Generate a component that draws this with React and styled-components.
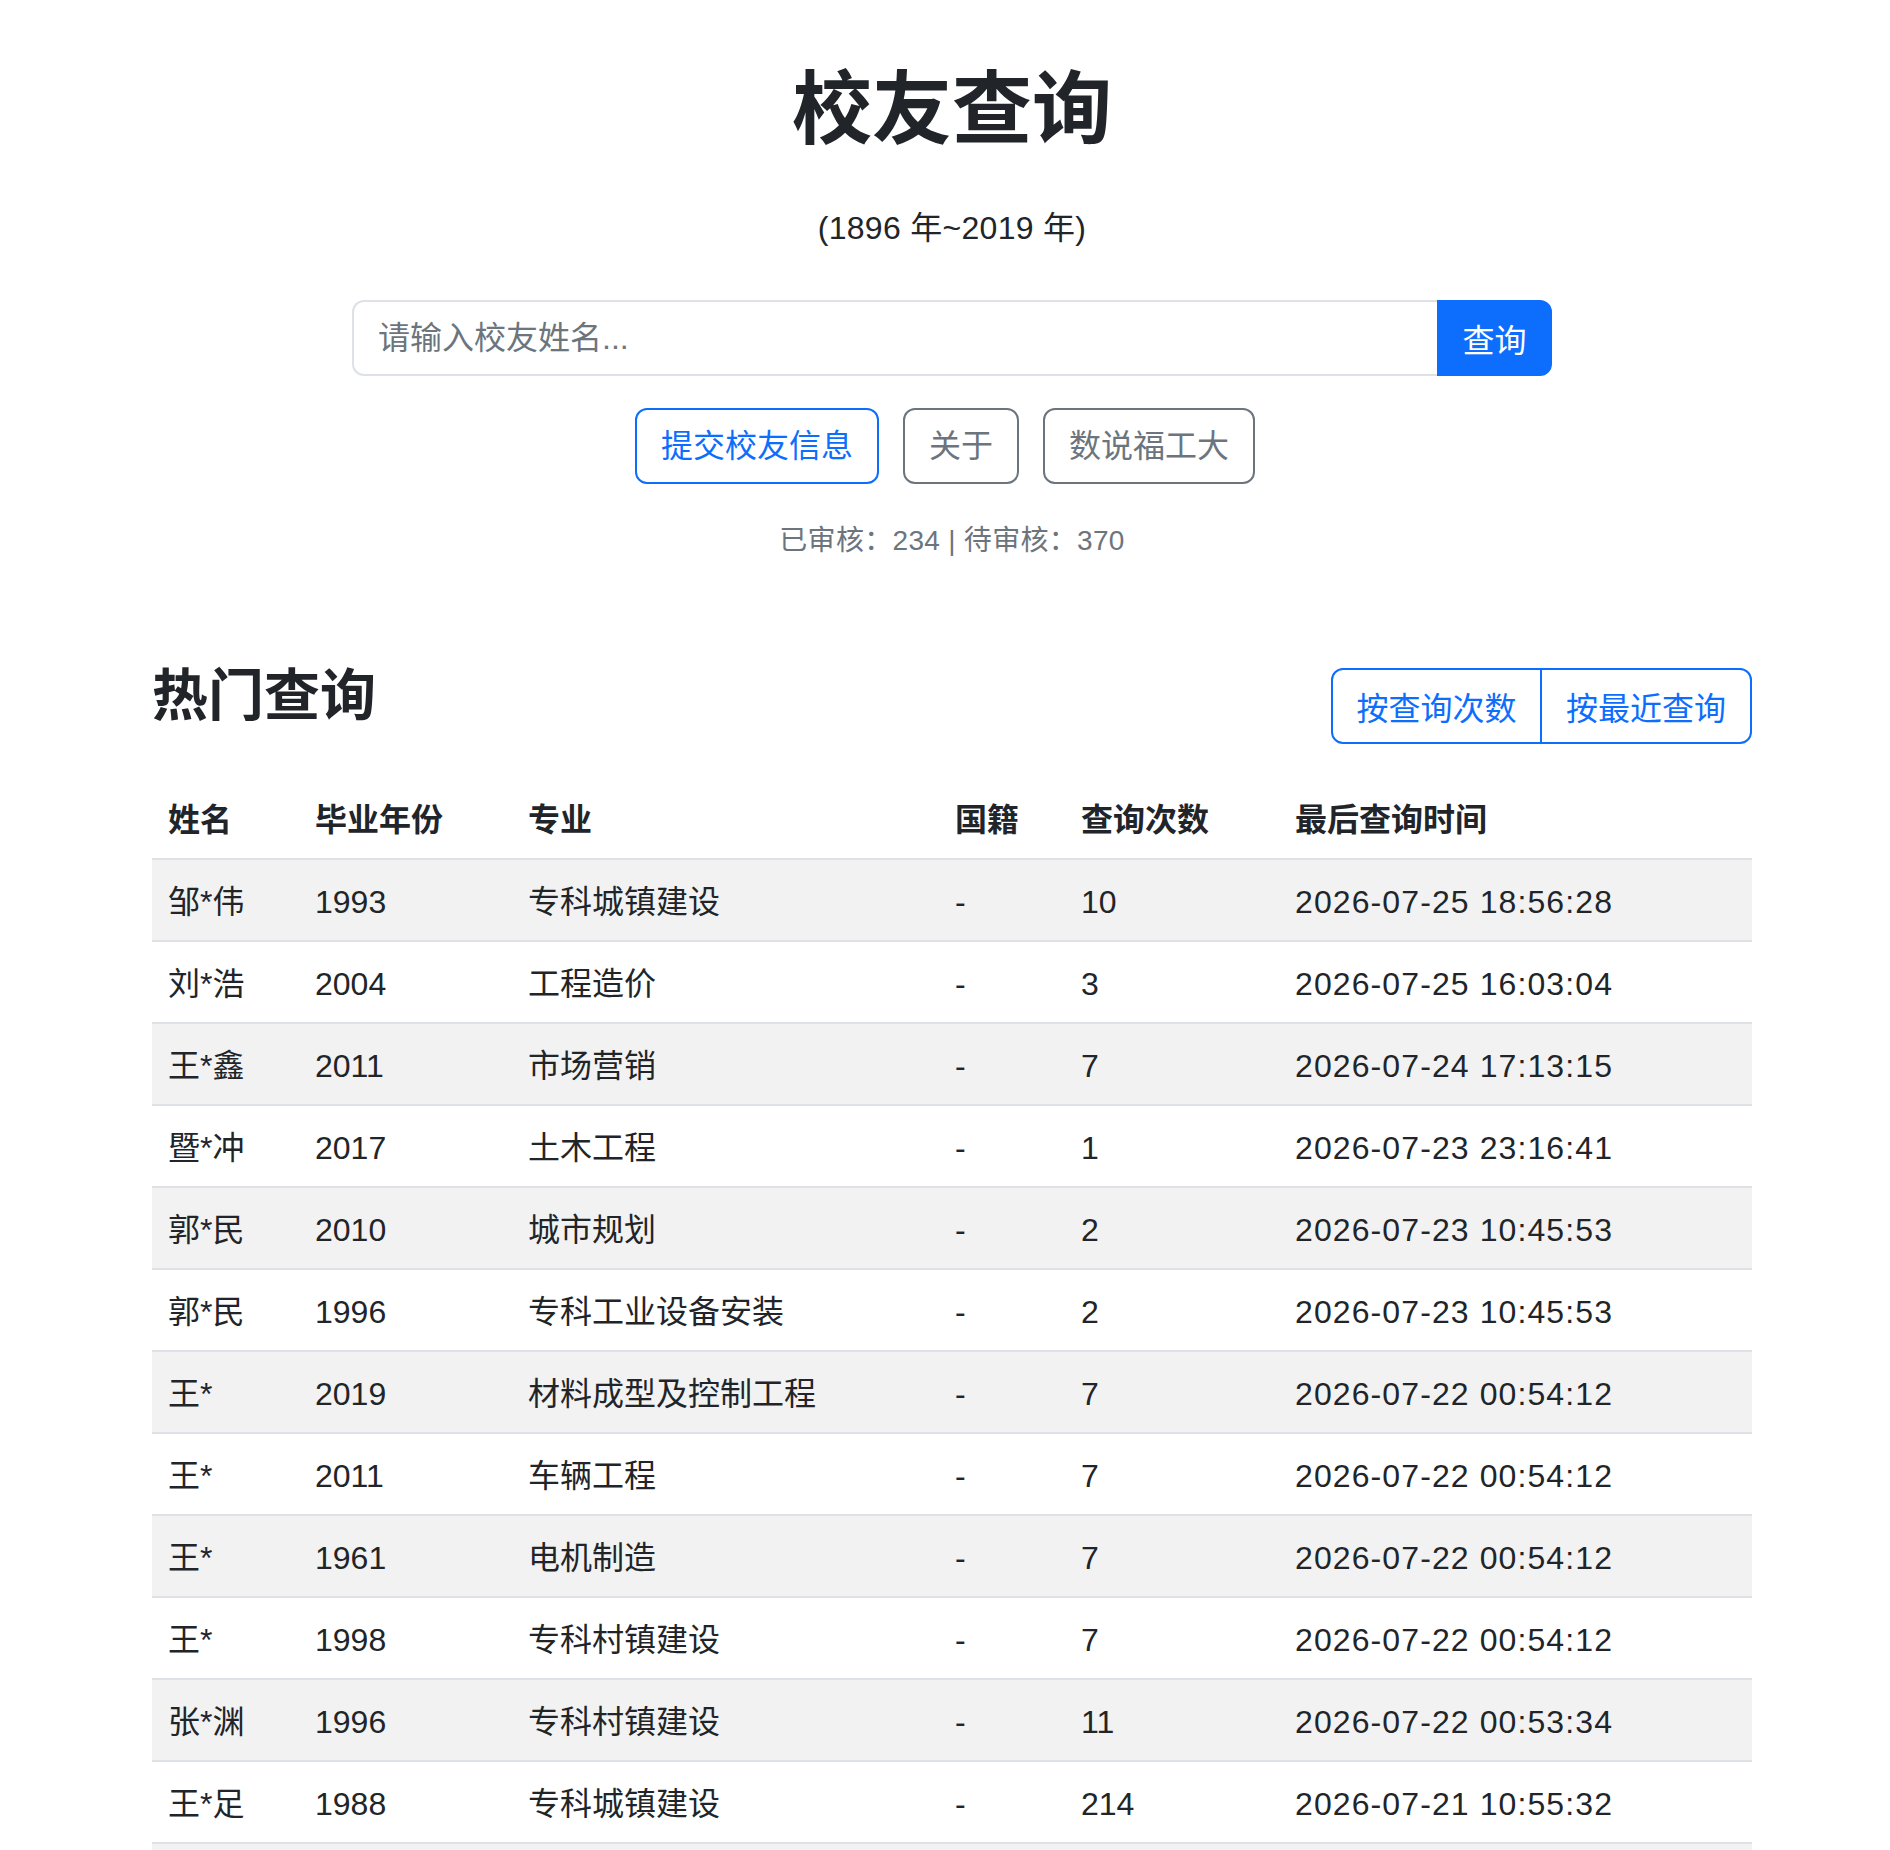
import React from "react";
import styled, { createGlobalStyle } from "styled-components";

const GlobalStyle = createGlobalStyle`
  html { scrollbar-width: none; }
  html::-webkit-scrollbar { display: none; }
  body {
    margin: 0;
    background: #ffffff;
    color: #212529;
    font-family: "Liberation Sans", "Noto Sans CJK SC", sans-serif;
    font-size: 32px;
    line-height: 48px;
  }
  * { box-sizing: border-box; }
`;

const Page = styled.div`
  padding-left: 14px;
`;

const Container = styled.div`
  width: 1600px;
  margin: 0 auto;
`;

const Hero = styled.header`
  padding-top: 62px;
  display: flex;
  flex-direction: column;
  align-items: center;
`;

const Title = styled.h1`
  margin: 0;
  font-size: 80px;
  line-height: 96px;
  font-weight: 700;
  color: #212529;
`;

const Subtitle = styled.p`
  margin: 46px 0 0;
  font-size: 32px;
  line-height: 48px;
  letter-spacing: 0.3px;
`;

const SearchGroup = styled.form`
  margin-top: 48px;
  width: 1200px;
  height: 76px;
  display: flex;
`;

const SearchInput = styled.input`
  flex: 1;
  min-width: 0;
  height: 100%;
  border: 2px solid #dee2e6;
  border-right: none;
  border-radius: 12px 0 0 12px;
  padding: 0 24px;
  font-family: inherit;
  font-size: 32px;
  color: #212529;
  outline: none;
  &::placeholder { color: #6c757d; }
`;

const SearchButton = styled.button`
  width: 115px;
  height: 100%;
  border: 2px solid #0d6efd;
  background: #0d6efd;
  color: #fff;
  border-radius: 0 12px 12px 0;
  font-family: inherit;
  font-size: 32px;
  padding: 0;
`;

const ActionRow = styled.div`
  margin-top: 32px;
  margin-right: 14px;
  display: flex;
  gap: 24px;
`;

const OutlineButton = styled.button`
  height: 76px;
  padding: 0 24px;
  background: #fff;
  border: 2px solid ${(p) => (p.$primary ? "#0d6efd" : "#6c757d")};
  color: ${(p) => (p.$primary ? "#0d6efd" : "#6c757d")};
  border-radius: 12px;
  font-family: inherit;
  font-size: 32px;
  line-height: 48px;
`;

const Stats = styled.p`
  margin: 36px 0 0;
  font-size: 28px;
  line-height: 42px;
  color: #6c757d;
  letter-spacing: 0.3px;
`;

const SectionHead = styled.div`
  margin-top: 100px;
  display: flex;
  justify-content: space-between;
  align-items: flex-start;
`;

const SectionTitle = styled.h3`
  margin: 0;
  font-size: 56px;
  line-height: 67px;
  font-weight: 700;
`;

const SortGroup = styled.div`
  margin-top: 6px;
  display: flex;
`;

const SortButton = styled.button`
  height: 76px;
  width: ${(p) => p.$w}px;
  padding: 0;
  background: #fff;
  border: 2px solid #0d6efd;
  color: #0d6efd;
  font-family: inherit;
  font-size: 32px;
  border-radius: ${(p) => (p.$first ? "12px 0 0 12px" : "0 12px 12px 0")};
  margin-left: ${(p) => (p.$first ? "0" : "-2px")};
`;

const Table = styled.table`
  margin-top: 33px;
  width: 1600px;
  table-layout: fixed;
  border-collapse: collapse;
`;

const HeadCell = styled.th`
  text-align: left;
  font-weight: 700;
  padding: 18px 16px 14px;
  height: 82px;
  border-bottom: 2px solid #dee2e6;
  white-space: nowrap;
`;

const Row = styled.tr`
  background: ${(p) => (p.$striped ? "#f2f2f2" : "#ffffff")};
`;

const Cell = styled.td`
  padding: 18px 16px 14px;
  height: 82px;
  border-bottom: 2px solid #dee2e6;
  white-space: nowrap;
  letter-spacing: ${(p) => (p.$time ? "1.1px" : "0")};
`;

const cols = [147, 213, 427, 126, 214, 473];
const headers = ["姓名", "毕业年份", "专业", "国籍", "查询次数", "最后查询时间"];

const rows = [
  ["邹*伟", "1993", "专科城镇建设", "-", "10", "2026-07-25 18:56:28"],
  ["刘*浩", "2004", "工程造价", "-", "3", "2026-07-25 16:03:04"],
  ["王*鑫", "2011", "市场营销", "-", "7", "2026-07-24 17:13:15"],
  ["暨*冲", "2017", "土木工程", "-", "1", "2026-07-23 23:16:41"],
  ["郭*民", "2010", "城市规划", "-", "2", "2026-07-23 10:45:53"],
  ["郭*民", "1996", "专科工业设备安装", "-", "2", "2026-07-23 10:45:53"],
  ["王*", "2019", "材料成型及控制工程", "-", "7", "2026-07-22 00:54:12"],
  ["王*", "2011", "车辆工程", "-", "7", "2026-07-22 00:54:12"],
  ["王*", "1961", "电机制造", "-", "7", "2026-07-22 00:54:12"],
  ["王*", "1998", "专科村镇建设", "-", "7", "2026-07-22 00:54:12"],
  ["张*渊", "1996", "专科村镇建设", "-", "11", "2026-07-22 00:53:34"],
  ["王*足", "1988", "专科城镇建设", "-", "214", "2026-07-21 10:55:32"],
  ["林*华", "2005", "建筑学", "-", "5", "2026-07-20 21:12:08"],
];

export default function App() {
  return (
    <Page>
      <GlobalStyle />
      <Container>
        <Hero>
          <Title>校友查询</Title>
          <Subtitle>(1896 年~2019 年)</Subtitle>
          <SearchGroup onSubmit={(e) => e.preventDefault()}>
            <SearchInput placeholder="请输入校友姓名..." />
            <SearchButton type="submit">查询</SearchButton>
          </SearchGroup>
          <ActionRow>
            <OutlineButton $primary>提交校友信息</OutlineButton>
            <OutlineButton>关于</OutlineButton>
            <OutlineButton>数说福工大</OutlineButton>
          </ActionRow>
          <Stats>已审核：234 | 待审核：370</Stats>
        </Hero>
        <SectionHead>
          <SectionTitle>热门查询</SectionTitle>
          <SortGroup>
            <SortButton $first $w={211}>按查询次数</SortButton>
            <SortButton $w={212}>按最近查询</SortButton>
          </SortGroup>
        </SectionHead>
        <Table>
          <colgroup>
            {cols.map((w, i) => (
              <col key={i} style={{ width: w }} />
            ))}
          </colgroup>
          <thead>
            <tr>
              {headers.map((h) => (
                <HeadCell key={h}>{h}</HeadCell>
              ))}
            </tr>
          </thead>
          <tbody>
            {rows.map((r, i) => (
              <Row key={i} $striped={i % 2 === 0}>
                {r.map((c, j) => (
                  <Cell key={j} $time={j === 5}>{c}</Cell>
                ))}
              </Row>
            ))}
          </tbody>
        </Table>
      </Container>
    </Page>
  );
}
